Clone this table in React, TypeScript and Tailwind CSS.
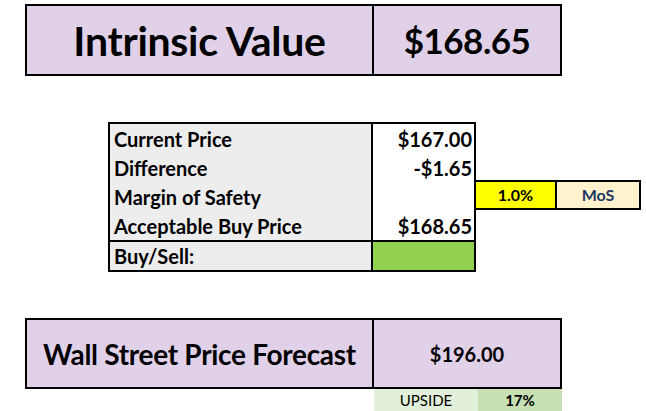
import React from "react";

const font = { fontFamily: "Lato, 'Liberation Sans', sans-serif" };

export default function App() {
  const rows = [
    ["Current Price", "$167.00"],
    ["Difference", "-$1.65"],
    ["Margin of Safety", ""],
    ["Acceptable Buy Price", "$168.65"],
  ];
  return (
    <div className="w-[646px] h-[411px] bg-white overflow-hidden text-black" style={font}>
      {/* Top box */}
      <div className="ml-[25px] mt-[4px] w-[537px] h-[72px] flex border-2 border-black bg-[#e0d1e9]">
        <div className="w-[347px] border-r-2 border-black flex items-center justify-center text-[41px] font-bold leading-none tracking-[-0.3px]">
          Intrinsic Value
        </div>
        <div className="flex-1 flex items-center justify-center text-[35px] font-bold leading-none tracking-[-0.5px]">
          $168.65
        </div>
      </div>

      {/* Middle table */}
      <div className="ml-[108px] mt-[46px] flex items-start">
        <div className="w-[368px] border-2 border-black">
          {rows.map(([l, v]) => (
            <div key={l} className="flex h-[29px]">
              <div className="w-[263px] bg-[#ededed] border-r-2 border-black pl-[4px] flex items-center text-[20px] font-bold leading-none">
                {l}
              </div>
              <div className="flex-1 bg-white flex items-center justify-end pr-[2px] text-[20px] font-bold leading-none">
                {v}
              </div>
            </div>
          ))}
          <div className="flex h-[30px] border-t-2 border-black">
            <div className="w-[263px] bg-[#ededed] border-r-2 border-black pl-[4px] flex items-center text-[20px] font-bold leading-none">
              Buy/Sell:
            </div>
            <div className="flex-1 bg-[#92d050]" />
          </div>
        </div>
        <div className="mt-[58px] flex h-[30px] border-y-2 border-r-2 border-black">
          <div className="w-[81px] bg-[#ffff00] border-r-2 border-black flex items-center justify-center text-[16px] font-bold leading-none">
            1.0%
          </div>
          <div className="w-[82px] bg-[#fff2cc] flex items-center justify-center text-[16px] font-bold leading-none text-[#203864]">
            MoS
          </div>
        </div>
      </div>

      {/* Bottom box */}
      <div className="ml-[25px] mt-[46px] w-[537px] h-[71px] flex border-2 border-black bg-[#e0d1e9]">
        <div className="w-[347px] border-r-2 border-black flex items-center justify-center text-[28px] font-bold leading-none tracking-[-0.3px]">
          Wall Street Price Forecast
        </div>
        <div className="flex-1 flex items-center justify-center text-[20px] font-bold leading-none">
          $196.00
        </div>
      </div>
      <div className="ml-[374px] flex h-[23px]">
        <div className="w-[104px] bg-[#e2efda] flex items-center justify-center text-[15px] leading-none">
          UPSIDE
        </div>
        <div className="w-[84px] bg-[#c6e0b4] flex items-center justify-center text-[15px] font-bold leading-none">
          17%
        </div>
      </div>
    </div>
  );
}
